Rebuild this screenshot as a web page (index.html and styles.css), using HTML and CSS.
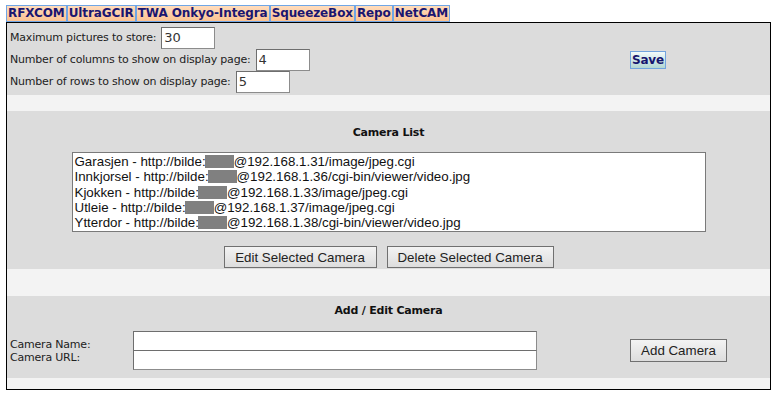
FILE: index.html
```html
<!DOCTYPE html>
<html lang="en">
<head>
    <meta charset="UTF-8">
    <meta name="viewport" content="width=device-width, initial-scale=1.0">
    <title>NetCAM Settings</title>
    <link rel="stylesheet" href="styles.css">
</head>
<body>
    <div class="tabs">
        <a class="tab">RFXCOM</a>
        <a class="tab">UltraGCIR</a>
        <a class="tab">TWA Onkyo-Integra</a>
        <a class="tab">SqueezeBox</a>
        <a class="tab">Repo</a>
        <a class="tab">NetCAM</a>
    </div>

    <div class="panel">
        <!-- display settings -->
        <div class="section settings">
            <div class="fields">
                <div class="field">
                    <label>Maximum pictures to store:</label>
                    <input type="text" class="num" value="30">
                </div>
                <div class="field">
                    <label>Number of columns to show on display page:</label>
                    <input type="text" class="num" value="4">
                </div>
                <div class="field">
                    <label>Number of rows to show on display page:</label>
                    <input type="text" class="num" value="5">
                </div>
            </div>
            <div class="side">
                <button class="save">Save</button>
            </div>
        </div>

        <div class="spacer"></div>

        <!-- camera list -->
        <div class="section list">
            <div class="title">Camera List</div>
            <div class="listbox">
                <div class="option">Garasjen - http://bilde:<span class="hidden-pw"></span>@192.168.1.31/image/jpeg.cgi</div>
                <div class="option">Innkjorsel - http://bilde:<span class="hidden-pw"></span>@192.168.1.36/cgi-bin/viewer/video.jpg</div>
                <div class="option">Kjokken - http://bilde:<span class="hidden-pw"></span>@192.168.1.33/image/jpeg.cgi</div>
                <div class="option">Utleie - http://bilde:<span class="hidden-pw"></span>@192.168.1.37/image/jpeg.cgi</div>
                <div class="option">Ytterdor - http://bilde:<span class="hidden-pw"></span>@192.168.1.38/cgi-bin/viewer/video.jpg</div>
            </div>
            <div class="actions">
                <button class="btn btn-edit">Edit Selected Camera</button>
                <button class="btn btn-delete">Delete Selected Camera</button>
            </div>
        </div>

        <div class="spacer tall"></div>

        <!-- add / edit -->
        <div class="section edit">
            <div class="title">Add / Edit Camera</div>
            <div class="edit-row">
                <div class="labels">
                    <div>Camera Name:</div>
                    <div>Camera URL:</div>
                </div>
                <div class="inputs">
                    <input type="text" class="wide">
                    <input type="text" class="wide">
                </div>
                <div class="gap"></div>
                <div class="side">
                    <button class="btn btn-add">Add Camera</button>
                </div>
            </div>
        </div>

        <div class="spacer short"></div>
    </div>
</body>
</html>
```

FILE: styles.css
```css
body {
    margin: 0;
    background-color: #fff;
    font-family: 'DejaVu Sans', sans-serif;
    font-size: 11px;
    color: #222;
}

.tabs {
    display: flex;
    margin: 5px 0 0 6px;
    height: 17px;
}

.tab {
    display: block;
    box-sizing: border-box;
    height: 17px;
    padding: 0 1px;
    border: 1px solid #6fa6e6;
    background: linear-gradient(#ffdcbc, #fcc393);
    color: #1a1670;
    font-weight: bold;
    font-size: 12px;
    line-height: 15px;
    letter-spacing: -0.1px;
}

.panel {
    width: 763px;
    margin-left: 6px;
    border: 1px solid #000;
}

.section {
    background-color: #dcdcdc;
}

.spacer {
    height: 16px;
    background-color: #f3f3f3;
}

.spacer.tall {
    height: 27px;
}

.spacer.short {
    height: 11px;
}

/* settings block */
.settings {
    display: grid;
    grid-template-columns: 1fr 140px;
    align-items: center;
    padding: 4px 0 2px;
}

.field {
    display: flex;
    align-items: center;
    padding-left: 3px;
    height: 21px;
    margin-bottom: 1px;
    letter-spacing: -0.2px;
}

.field label {
    margin-right: 5px;
}

input {
    box-sizing: border-box;
    margin: 0;
    border: 1px solid #8c8c8c;
    border-top-color: #6e6e6e;
    border-left-color: #6e6e6e;
    background: #fff;
    font-family: 'DejaVu Sans', sans-serif;
    font-size: 13px;
    color: #333;
    padding: 0 2px;
}

.num {
    width: 54px;
    height: 22px;
}

.save {
    box-sizing: border-box;
    height: 18px;
    padding: 0 1px;
    border: 1px solid #72a4de;
    background: linear-gradient(#f2fbfb, #b3d7d3);
    color: #16166e;
    font-family: 'DejaVu Sans', sans-serif;
    font-weight: bold;
    font-size: 12px;
    letter-spacing: -0.2px;
}

/* titles */
.title {
    text-align: center;
    font-weight: bold;
    line-height: 13px;
    letter-spacing: -0.2px;
    color: #111;
}

/* camera list */
.list {
    padding: 15px 0 1px;
}

.listbox {
    box-sizing: border-box;
    width: 634px;
    height: 80px;
    margin: 13px auto 0;
    padding: 1px 2px;
    border: 1px solid #7a7a7a;
    background: #fff;
    font-family: 'Liberation Sans', Arial, sans-serif;
    font-size: 13.333px;
    color: #111;
    overflow: hidden;
}

.option {
    line-height: 15.33px;
    white-space: nowrap;
}

.hidden-pw {
    display: inline-block;
    width: 29px;
    height: 13px;
    margin-left: -1px;
    vertical-align: -2px;
    background-color: #808080;
}

.actions {
    display: flex;
    justify-content: center;
    gap: 10px;
    margin-top: 14px;
}

.btn {
    box-sizing: border-box;
    height: 22px;
    padding: 0;
    border: 1px solid #707070;
    background: linear-gradient(#f3f3f3, #dddddd);
    font-family: 'Liberation Sans', Arial, sans-serif;
    font-size: 13.333px;
    color: #222;
}

.btn-edit {
    width: 153px;
}

.btn-delete {
    width: 167px;
}

/* add / edit */
.edit {
    padding: 8px 0 8px;
}

.edit-row {
    display: grid;
    grid-template-columns: 126px 404px 1fr 140px;
    align-items: center;
    margin-top: 14px;
}

.labels {
    padding-left: 3px;
    line-height: 13px;
    letter-spacing: -0.2px;
}

.inputs {
    display: flex;
    flex-direction: column;
}

.wide {
    width: 404px;
    height: 20px;
}

.wide + .wide {
    margin-top: -1px;
}

.btn-add {
    width: 97px;
    height: 23px;
}
```
